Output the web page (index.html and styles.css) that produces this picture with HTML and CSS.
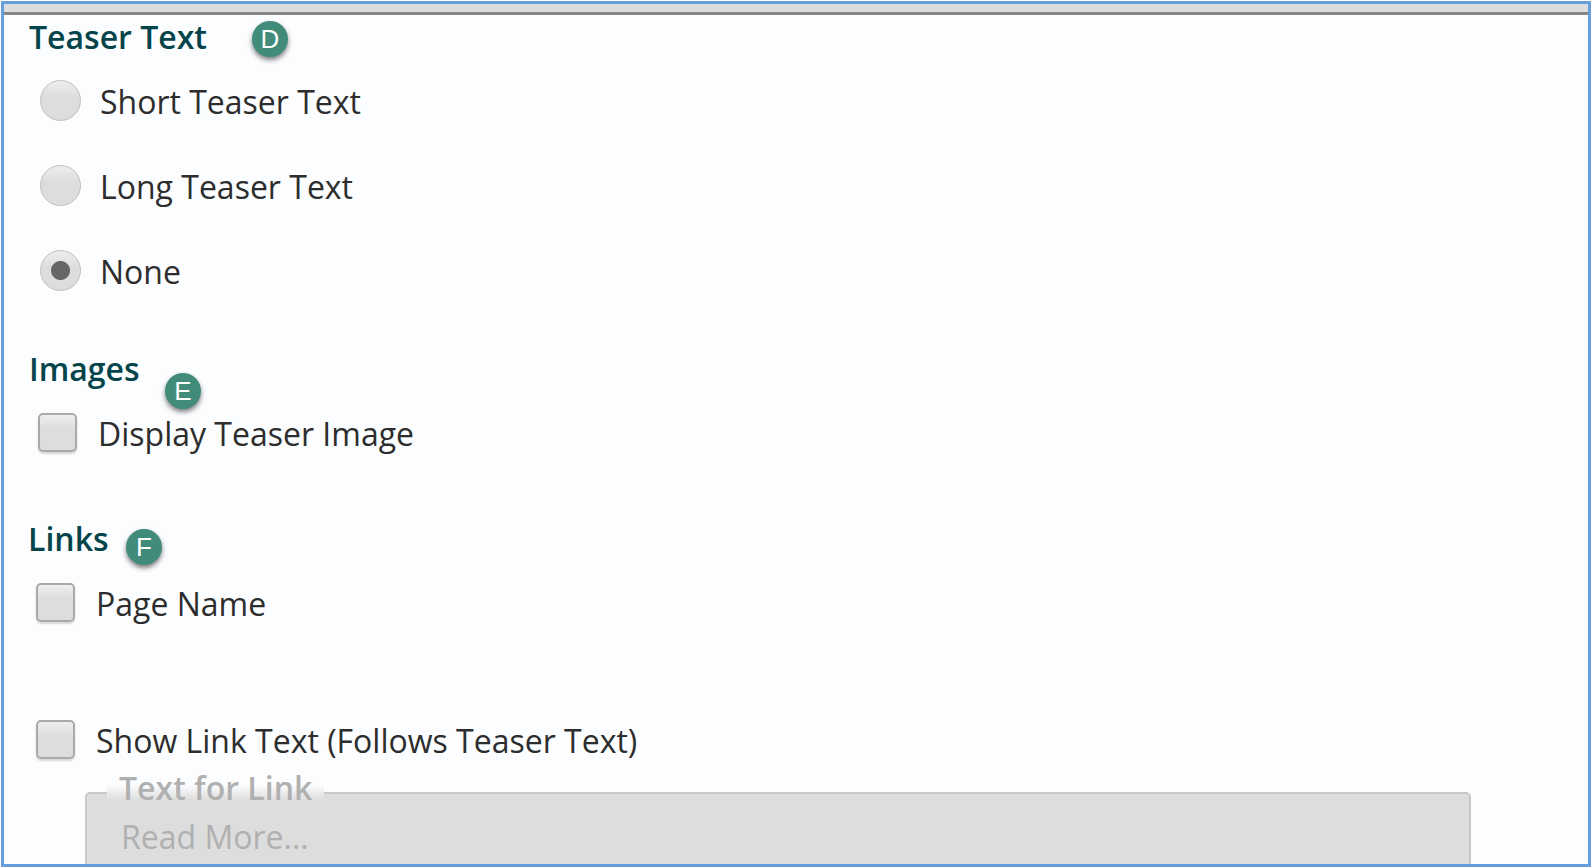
FILE: index.html
```html
<!DOCTYPE html>
<html lang="en">
<head>
  <meta charset="UTF-8">
  <title>Teaser Settings</title>
  <meta name="viewport" content="width=device-width, initial-scale=1.0">
  <link rel="stylesheet" href="styles.css">
</head>
<body>
  <form class="panel">
    <div class="panel-bar"></div>

    <section class="group" role="radiogroup" aria-labelledby="teaser-title">
      <h2 id="teaser-title">Teaser Text</h2>
      <span class="badge badge-d">D</span>
      <div class="options">
        <div class="option">
          <input type="radio" id="short" name="teaser" value="short">
          <label for="short">Short Teaser Text</label>
        </div>
        <div class="option">
          <input type="radio" id="long" name="teaser" value="long">
          <label for="long">Long Teaser Text</label>
        </div>
        <div class="option">
          <input type="radio" id="none" name="teaser" value="none" checked>
          <label for="none">None</label>
        </div>
      </div>
    </section>

    <section class="group images">
      <h2>Images</h2>
      <span class="badge badge-e">E</span>
      <div class="option">
        <input type="checkbox" id="teaser-image" name="teaser-image">
        <label for="teaser-image">Display Teaser Image</label>
      </div>
    </section>

    <section class="group links">
      <h2>Links</h2>
      <span class="badge badge-f">F</span>
      <div class="options">
        <div class="option">
          <input type="checkbox" id="page-name" name="page-name">
          <label for="page-name">Page Name</label>
        </div>
        <div class="option">
          <input type="checkbox" id="link-text" name="link-text">
          <label for="link-text">Show Link Text (Follows Teaser Text)</label>
        </div>
      </div>
    </section>

    <div class="field">
      <label for="link-label">Text for Link</label>
      <input type="text" id="link-label" name="link-label" value="Read More..." disabled>
    </div>
  </form>
</body>
</html>
```
FILE: styles.css
```css
* {
  box-sizing: border-box;
}
body {
  margin: 0;
  padding: 1px;
  height: 100vh;
  background-color: white;
  font-family: "Open Sans", sans-serif;
  font-size: 32px;
  line-height: 44px;
  color: #2d2d2d;
}
.panel {
  height: 100%;
  overflow: hidden;
  border: 3px solid #669ddf;
  background-color: #fcfdff;
}
.panel-bar {
  height: 11px;
  background-color: #dcdcdc;
  border-bottom: 3px solid #858585;
}
.group {
  position: relative;
  padding-left: 25px;
}
.group h2 {
  margin: 0 0 21px;
  font-size: 32px;
  font-weight: 600;
  color: #04444a;
}
.options {
  display: flex;
  flex-direction: column;
  gap: 41px;
}
.option {
  display: flex;
  align-items: center;
  gap: 19px;
  padding-left: 11px;
}
.images {
  margin-top: 53px;
}
.links {
  margin-top: 61px;
  padding-left: 24px;
}
.images .option {
  gap: 21px;
  padding-left: 9px;
}
.links .option {
  gap: 21px;
  padding-left: 8px;
}
.links .options {
  gap: 93px;
}
input[type="radio"],
input[type="checkbox"] {
  appearance: none;
  flex: none;
  margin: 0 0 3px;
  background: linear-gradient(#eeeeee, #dddddd 40%);
}
input[type="radio"] {
  width: 41px;
  height: 41px;
  border: 1px solid #bfbfbf;
  border-radius: 50%;
}
input[type="radio"]:checked {
  background: radial-gradient(circle, #666666 9px, transparent 10px), linear-gradient(#eeeeee, #dddddd 40%);
}
input[type="checkbox"] {
  width: 39px;
  height: 39px;
  border: 2px solid #aaaaaa;
  border-radius: 5px;
  box-shadow: 0 2px 2px rgba(0, 0, 0, 0.15);
}

/* lettered callouts */
.badge {
  position: absolute;
  width: 36px;
  height: 36px;
  border-radius: 50%;
  background-color: #418b7a;
  box-shadow: 0 3px 5px rgba(0, 0, 0, 0.5);
  color: white;
  font-family: "Liberation Sans", Arial, sans-serif;
  font-size: 26px;
  line-height: 36px;
  text-align: center;
}
.badge-d {
  left: 248px;
  top: 6px;
}
.badge-e {
  left: 161px;
  top: 26px;
}
.badge-f {
  left: 122px;
  top: 12px;
}

.field {
  position: relative;
  margin: 29px 117px 0 81px;
}
.field label {
  position: absolute;
  left: 22px;
  top: -26px;
  height: 34px;
  padding: 0 12px;
  background: linear-gradient(transparent 55%, #fcfdff 55%, #dddddd);
  font-weight: 600;
  color: #b0b0b0;
}
.field input {
  display: block;
  width: 100%;
  height: 88px;
  padding: 0 34px;
  border: 2px solid #c8c8c8;
  border-radius: 5px;
  background-color: #dddddd;
  font: inherit;
  color: #b0b0b0;
}
```
